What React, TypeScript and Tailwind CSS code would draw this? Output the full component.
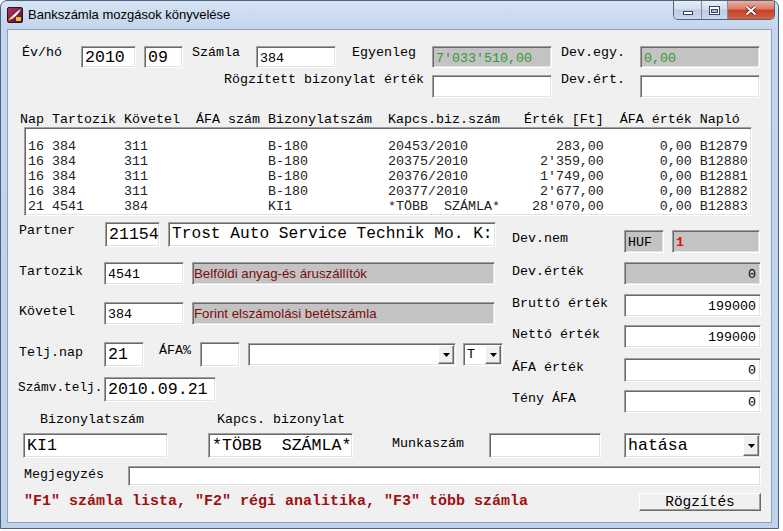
import React from "react";

const mono = "font-['Liberation_Mono','Courier_New',monospace]";
const small = `${mono} text-[13.33px] leading-[15px]`;
const big = `${mono} text-[16.6px] leading-[19px]`;
const sunken =
  "border border-t-[#a0a0a0] border-l-[#a0a0a0] border-r-white border-b-white shadow-[inset_1px_1px_0_#696969,inset_-1px_-1px_0_#e3e3e3]";
const raised =
  "border border-t-white border-l-white border-r-[#696969] border-b-[#696969] shadow-[inset_-1px_-1px_0_#a0a0a0]";

type P = { className?: string; children?: React.ReactNode };

function Label({ className = "", children }: P) {
  return <span className={`${small} shrink-0 whitespace-pre text-black ${className}`}>{children}</span>;
}

function Field({
  className = "",
  gray = false,
  text = small,
  right = false,
  children,
}: P & { gray?: boolean; text?: string; right?: boolean }) {
  return (
    <div
      className={`${sunken} ${gray ? "bg-[#c3c3c3]" : "bg-white"} shrink-0 flex items-center overflow-hidden whitespace-pre ${
        right ? "justify-end pr-[4px]" : "pl-[3px]"
      } ${text} ${className}`}
    >
      {children}
    </div>
  );
}

function Arrow() {
  return (
    <div className={`${raised} bg-[#f0f0f0] w-[16px] self-stretch my-[1px] mr-[1px] ml-auto flex items-center justify-center shrink-0`}>
      <svg width="7" height="4" viewBox="0 0 7 4">
        <path d="M0 0h7L3.5 4z" fill="#000" />
      </svg>
    </div>
  );
}

const header = "Nap Tartozik Követel  ÁFA szám Bizonylatszám  Kapcs.biz.szám   Érték [Ft]  ÁFA érték Napló";

const rows = [
  ["16 384", "311", "B-180", "20453/2010", "283,00", "0,00", "B12879"],
  ["16 384", "311", "B-180", "20375/2010", "2'359,00", "0,00", "B12880"],
  ["16 384", "311", "B-180", "20376/2010", "1'749,00", "0,00", "B12881"],
  ["16 384", "311", "B-180", "20377/2010", "2'677,00", "0,00", "B12882"],
  ["21 4541", "384", "KI1", "*TÖBB  SZÁMLA*", "28'070,00", "0,00", "B12883"],
];

const line = (r: string[]) =>
  r[0].padEnd(12) + r[1].padEnd(18) + r[2].padEnd(15) + r[3].padEnd(17) + r[4].padStart(10) + r[5].padStart(11) + " " + r[6];

function AppIcon() {
  return (
    <svg width="16" height="16" viewBox="0 0 16 16" className="shrink-0">
      <defs>
        <linearGradient id="ig" x1="0" y1="0" x2="1" y2="1">
          <stop offset="0" stopColor="#b03a5a" />
          <stop offset="1" stopColor="#4a1030" />
        </linearGradient>
      </defs>
      <rect x="0.5" y="0.5" width="15" height="15" rx="1.5" fill="url(#ig)" stroke="#3a0c20" />
      <path d="M3 12 C6 8 9 5 14 2 C12 6 9 9 5 12 Z" fill="#fff" />
      <path d="M2 13 L6 9" stroke="#f2d040" strokeWidth="1.5" />
      <rect x="9" y="10" width="5" height="4" fill="#e8c030" />
    </svg>
  );
}

function CaptionButtons() {
  const glass = "bg-[linear-gradient(to_bottom,#e6edf7,#d3deed_45%,#bccce2_50%,#cad8eb)]";
  return (
    <div className="ml-auto mr-[3px] flex h-[19px] rounded-b-[5px] border border-t-0 border-[#53647b] overflow-hidden shrink-0">
      <div className={`w-[28px] ${glass} border-r border-[#7f8fa5] flex items-center justify-center`}>
        <div className="w-[10px] h-[4px] bg-white border border-[#34445a] mt-[5px]" />
      </div>
      <div className={`w-[26px] ${glass} border-r border-[#7f8fa5] flex items-center justify-center`}>
        <svg width="11" height="9" viewBox="0 0 11 9">
          <rect x="0.5" y="0.5" width="10" height="8" fill="#fff" stroke="#34445a" />
          <rect x="2.5" y="3.5" width="6" height="3" fill="#a8b8cf" stroke="#34445a" />
        </svg>
      </div>
      <div className="w-[46px] bg-[linear-gradient(to_bottom,#eab0a2,#d97a66_45%,#c4412a_50%,#d5603f)] flex items-center justify-center">
        <svg width="14" height="11" viewBox="0 0 14 11">
          <path d="M2.5 1.5L11.5 9.5M11.5 1.5L2.5 9.5" stroke="#5a1d12" strokeWidth="3.6" />
          <path d="M2.5 1.5L11.5 9.5M11.5 1.5L2.5 9.5" stroke="#fff" strokeWidth="2" />
        </svg>
      </div>
    </div>
  );
}

export default function App() {
  return (
    <div className="w-[783px] h-[531px] bg-white overflow-hidden">
      <div className="w-[779px] h-[529px] rounded-t-[7px] border border-[#4f627a] bg-[linear-gradient(to_bottom,#d5e3f4_0px,#c3d6ed_28px,#bed2ea_100%)] flex flex-col">
        <div className="h-[28px] flex items-start shrink-0">
          <div className="ml-[6px] mt-[6px]">
            <AppIcon />
          </div>
          <span className="ml-[5px] mt-[6px] text-[13px] leading-[16px] text-black font-['Liberation_Sans',Arial,sans-serif]">
            Bankszámla mozgások könyvelése
          </span>
          <CaptionButtons />
        </div>

        <div className="ml-[6px] w-[765px] h-[494px] border border-[#8ea2bb] bg-[#f0f0f0] flex flex-col">
          {/* felső sor */}
          <div className="mt-[16px] flex items-start h-[22px]">
            <Label className="ml-[14px] w-[59px] -mt-px">Év/hó</Label>
            <Field className="w-[55px] h-[22px]" text={big}>2010</Field>
            <Field className="ml-[8px] w-[39px] h-[22px]" text={big}>09</Field>
            <Label className="ml-[9px] w-[64px] -mt-px">Számla</Label>
            <Field className="w-[80px] h-[22px] pt-[2px]">384</Field>
            <Label className="ml-[16px] w-[80px] -mt-px">Egyenleg</Label>
            <Field gray className="w-[120px] h-[22px] pt-[2px] text-[#339933]">7'033'510,00</Field>
            <Label className="ml-[9px] w-[79px] -mt-px">Dev.egy.</Label>
            <Field gray className="w-[120px] h-[22px] pt-[2px] text-[#339933]">0,00</Field>
          </div>

          <div className="mt-[7px] flex items-start h-[23px]">
            <Label className="ml-[216px] w-[208px] -mt-[3px]">Rögzített bizonylat érték</Label>
            <Field className="w-[120px] h-[23px]" />
            <Label className="ml-[9px] w-[79px] -mt-[3px]">Dev.ért.</Label>
            <Field className="w-[120px] h-[23px]" />
          </div>

          {/* lista */}
          <div className={`${small} whitespace-pre ml-[12px] mt-[14px] h-[15px]`}>{header}</div>
          <div className={`${sunken} bg-white ml-[16px] w-[728px] h-[89px] pt-[11px] pl-[3px] overflow-hidden`}>
            {rows.map((r) => (
              <div key={r[6]} className={`${small} whitespace-pre text-[#222]`}>
                {line(r)}
              </div>
            ))}
          </div>

          {/* alsó rész */}
          <div className="mt-[6px] flex items-start">
            <div className="w-[496px] flex flex-col shrink-0">
              <div className="flex items-start h-[25px]">
                <Label className="pl-[11px] w-[97px] mt-[1px]">Partner</Label>
                <Field className="w-[55px] h-[25px]" text={big}>21154</Field>
                <Field className="ml-[8px] w-[328px] h-[25px]" text={`${mono} text-[16.2px] leading-[19px]`}>
                  Trost Auto Service Technik Mo. K:
                </Field>
              </div>
              <div className="mt-[15px] flex items-start h-[23px]">
                <Label className="pl-[11px] w-[96px] mt-[2px]">Tartozik</Label>
                <Field className="w-[80px] h-[23px] pt-[1px]">4541</Field>
                <Field
                  gray
                  className="ml-[8px] w-[303px] h-[23px] !pl-[1px] text-[#7a0c0c]"
                  text="font-['Liberation_Sans',Arial,sans-serif] text-[13.3px]"
                >
                  Belföldi anyag-és áruszállítók
                </Field>
              </div>
              <div className="mt-[17px] flex items-start h-[23px]">
                <Label className="pl-[11px] w-[96px] mt-[2px]">Követel</Label>
                <Field className="w-[80px] h-[23px] pt-[1px]">384</Field>
                <Field
                  gray
                  className="ml-[8px] w-[303px] h-[23px] !pl-[1px] text-[#7a0c0c]"
                  text="font-['Liberation_Sans',Arial,sans-serif] text-[13.3px]"
                >
                  Forint elszámolási betétszámla
                </Field>
              </div>
              <div className="mt-[17px] flex items-start h-[25px]">
                <Label className="pl-[11px] w-[96px] mt-[3px]">Telj.nap</Label>
                <Field className="w-[40px] h-[25px]" text={big}>21</Field>
                <Label className="ml-[15px] w-[41px] mt-[1px]">ÁFA%</Label>
                <Field className="w-[40px] h-[25px]" />
                <Field className="ml-[8px] mt-[1px] w-[208px] h-[23px]">
                  <Arrow />
                </Field>
                <Field className="ml-[7px] mt-[1px] w-[40px] h-[23px]">
                  <span>T</span>
                  <Arrow />
                </Field>
              </div>
              <div className="mt-[10px] flex items-start h-[25px]">
                <span className={`${mono} text-[12.8px] leading-[15px] pl-[10px] w-[96px] mt-[3px] shrink-0 whitespace-pre`}>Számv.telj.</span>
                <Field className="w-[112px] h-[25px]" text={big}>2010.09.21</Field>
              </div>
              <div className="mt-[10px] flex items-start h-[15px]">
                <Label className="pl-[32px] w-[209px]">Bizonylatszám</Label>
                <Label>Kapcs. bizonylat</Label>
              </div>
            </div>

            <div className="ml-[8px] mt-[8px] flex flex-col shrink-0">
              <div className="flex items-start h-[23px]">
                <Label className="w-[112px] mt-[1px]">Dev.nem</Label>
                <Field gray className="w-[40px] h-[23px] pt-[1px]">HUF</Field>
                <Field gray className="ml-[8px] w-[88px] h-[23px] pt-[1px] font-bold text-[#e01010]">1</Field>
              </div>
              <div className="mt-[9px] flex items-start h-[23px]">
                <Label className="w-[112px] mt-[2px]">Dev.érték</Label>
                <Field gray right className="w-[137px] h-[23px] pt-[1px]">0</Field>
              </div>
              <div className="mt-[9px] flex items-start h-[23px]">
                <Label className="w-[112px] mt-[2px]">Bruttó érték</Label>
                <Field right className="w-[137px] h-[23px] pt-[1px]">199000</Field>
              </div>
              <div className="mt-[8px] flex items-start h-[23px]">
                <Label className="w-[112px] mt-[2px]">Nettó érték</Label>
                <Field right className="w-[137px] h-[23px] pt-[1px]">199000</Field>
              </div>
              <div className="mt-[10px] flex items-start h-[24px]">
                <Label className="w-[112px] mt-[2px]">ÁFA érték</Label>
                <Field right className="w-[137px] h-[24px] pt-[1px]">0</Field>
              </div>
              <div className="mt-[8px] flex items-start h-[23px]">
                <Label className="w-[112px] mt-[1px]">Tény ÁFA</Label>
                <Field right className="w-[137px] h-[23px] pt-[1px]">0</Field>
              </div>
            </div>
          </div>

          <div className="mt-[6px] flex items-start h-[25px]">
            <Field className="ml-[15px] w-[145px] h-[25px]" text={big}>KI1</Field>
            <Field className="ml-[40px] w-[145px] h-[25px]" text={big}>*TÖBB  SZÁMLA*</Field>
            <Label className="ml-[39px] w-[97px] mt-[3px]">Munkaszám</Label>
            <Field className="w-[112px] h-[25px]" />
            <Field className="ml-[23px] w-[137px] h-[25px]" text={big}>
              <span>hatása</span>
              <Arrow />
            </Field>
          </div>

          <div className="mt-[8px] flex items-start h-[20px]">
            <Label className="ml-[16px] w-[104px] mt-[1px]">Megjegyzés</Label>
            <Field className="w-[633px] h-[20px]" />
          </div>

          <div className="mt-[7px] flex items-start h-[18px]">
            <span className={`${mono} ml-[16px] text-[15px] leading-[17px] font-bold text-[#a01010] whitespace-pre`}>
              "F1" számla lista, "F2" régi analitika, "F3" több számla
            </span>
            <button
              className={`${raised} ml-auto mr-[10px] w-[122px] h-[18px] bg-[#f0f0f0] ${mono} text-[14.5px] leading-[14px] text-black flex items-center justify-center`}
            >
              Rögzítés
            </button>
          </div>
        </div>
      </div>
    </div>
  );
}
